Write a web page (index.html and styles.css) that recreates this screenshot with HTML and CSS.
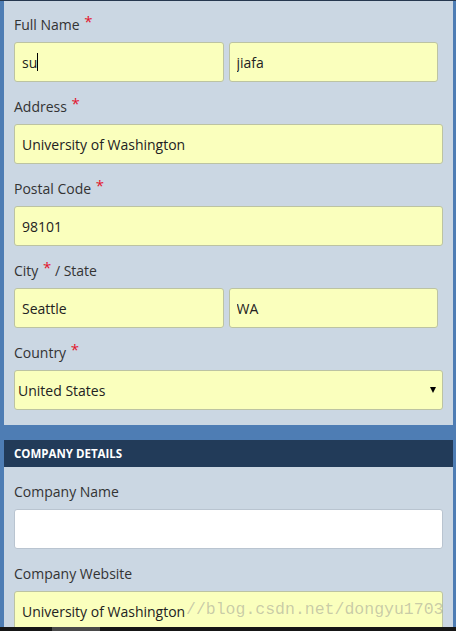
FILE: index.html
```html
<!DOCTYPE html>
<html lang="en">
<head>
  <meta charset="UTF-8">
  <meta name="viewport" content="width=device-width, initial-scale=1.0">
  <title>Registration</title>
  <link rel="stylesheet" href="styles.css">
</head>
<body>
  <!-- Personal details -->
  <div class="panel">
    <div class="field">
      <label>Full Name <span class="req">*</span></label>
      <div class="pair">
        <div class="caret-wrap">
          <input type="text" class="control filled" value="su">
          <span class="caret"></span>
        </div>
        <input type="text" class="control filled" value="jiafa">
      </div>
    </div>
    <div class="field">
      <label>Address <span class="req">*</span></label>
      <input type="text" class="control filled" value="University of Washington">
    </div>
    <div class="field">
      <label>Postal Code <span class="req">*</span></label>
      <input type="text" class="control filled" value="98101">
    </div>
    <div class="field">
      <label>City <span class="req">*</span> / State</label>
      <div class="pair">
        <input type="text" class="control filled" value="Seattle">
        <input type="text" class="control filled" value="WA">
      </div>
    </div>
    <div class="field">
      <label>Country <span class="req">*</span></label>
      <div class="select-wrap">
        <select class="control filled select">
          <option>United States</option>
        </select>
      </div>
    </div>
  </div>

  <!-- Company details -->
  <div class="panel company">
    <div class="panel-head">COMPANY DETAILS</div>
    <div class="panel-body">
      <div class="field">
        <label>Company Name</label>
        <input type="text" class="control">
      </div>
      <div class="field">
        <label>Company Website</label>
        <div class="mark-wrap">
          <input type="text" class="control filled" value="University of Washington">
          <span class="watermark">//blog.csdn.net/dongyu1703</span>
        </div>
      </div>
    </div>
  </div>

  <div class="taskbar"><span class="task"></span></div>
</body>
</html>
```

FILE: styles.css
```css
body {
  margin: 0;
  font-family: 'Open Sans', 'Noto Sans', sans-serif;
  font-size: 14px;
  color: #333;
  background: #4e7db4;
  border-top: 1px solid #26384f;
  height: 630px;
  overflow: hidden;
}

/* Panels */
.panel {
  display: flow-root;
  background: #cbd7e3;
  margin: 0 3px 0 4px;
  padding: 14px 10px 0 10px;
}

.panel.company {
  margin-top: 15px;
  padding: 0;
}

.panel-head {
  background: #223b59;
  color: #fff;
  font-size: 11.5px;
  font-weight: bold;
  height: 27px;
  line-height: 27px;
  padding-left: 10px;
}

.panel-body {
  padding: 15px 10px 0 10px;
}

/* Fields */
.field {
  margin-bottom: 15px;
}

.field label {
  display: block;
  height: 20px;
  line-height: 20px;
  margin-bottom: 7px;
}

.req {
  color: #e2142d;
  font-size: 15px;
  line-height: 0;
  position: relative;
  top: -3px;
  margin-left: 1px;
}

.pair {
  display: grid;
  grid-template-columns: 1fr 1fr;
  gap: 5px;
  margin-right: 5px;
}

.control {
  box-sizing: border-box;
  display: block;
  width: 100%;
  height: 40px;
  margin: 0;
  padding: 0 7px;
  border: 1px solid #b9c4d0;
  border-radius: 3px;
  background: #fff;
  font-family: inherit;
  font-size: 14px;
  color: #222;
  outline: none;
}

.control.filled {
  background: #faffbd;
  border-color: #bcc3a2;
}

/* Select */
.select-wrap {
  position: relative;
}

.select {
  appearance: none;
  -webkit-appearance: none;
  padding-left: 3px;
}

.select-wrap::after {
  content: '';
  position: absolute;
  right: 7px;
  top: 17px;
  border-left: 3px solid transparent;
  border-right: 3px solid transparent;
  border-top: 6px solid #000;
}

/* Text cursor in first input */
.caret-wrap {
  position: relative;
}

.caret {
  position: absolute;
  left: 23px;
  top: 11px;
  width: 1px;
  height: 18px;
  background: #000;
}

/* Watermark */
.mark-wrap {
  position: relative;
}

.watermark {
  position: absolute;
  left: 172px;
  top: 9px;
  font-family: 'Liberation Mono', monospace;
  font-size: 16.5px;
  color: rgba(140, 140, 140, 0.45);
  pointer-events: none;
  white-space: nowrap;
}

/* Bottom strip */
.taskbar {
  position: fixed;
  left: 0;
  right: 0;
  bottom: 0;
  height: 4px;
  background: #161616;
}

.taskbar .task {
  display: block;
  margin-left: 52px;
  width: 48px;
  height: 4px;
  background: #4a4a4a;
}
```
